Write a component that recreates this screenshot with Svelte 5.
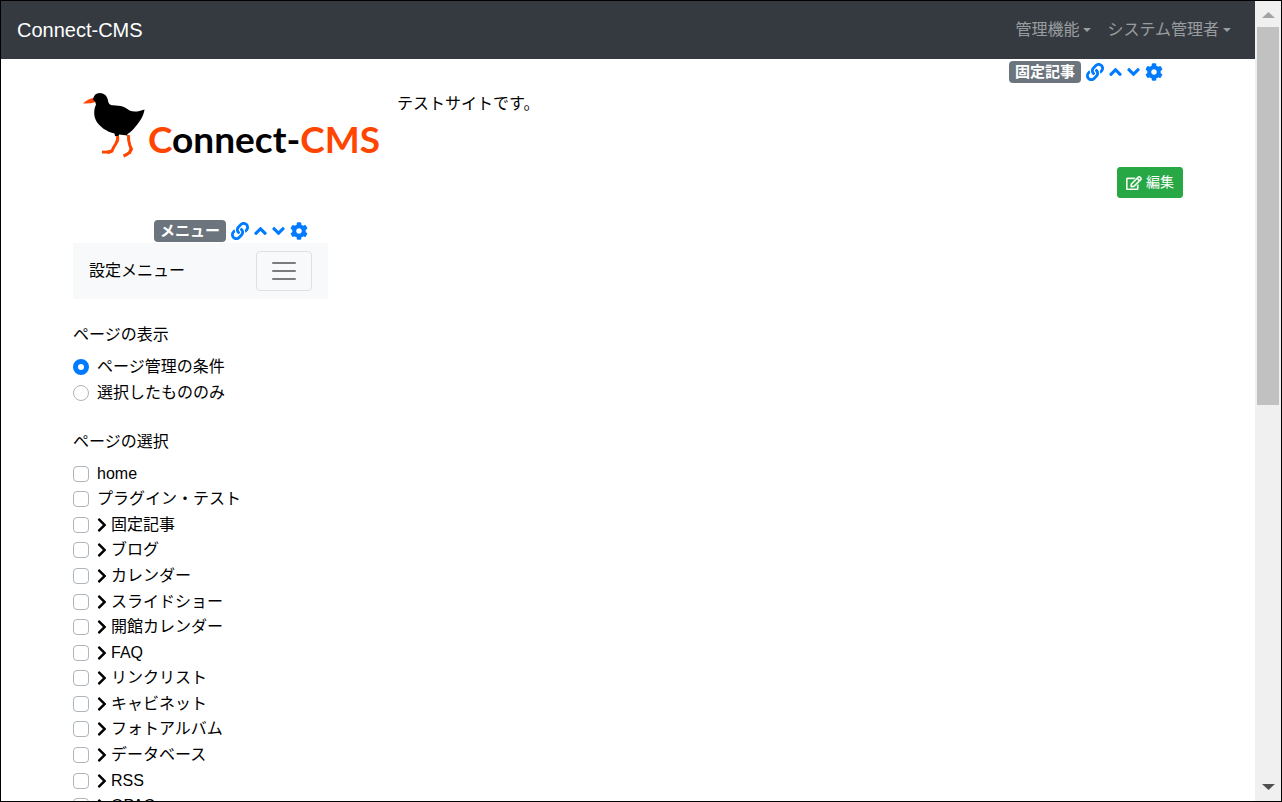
<script>
  const pages = [
    { name: 'home', child: false },
    { name: 'プラグイン・テスト', child: false },
    { name: '固定記事', child: true },
    { name: 'ブログ', child: true },
    { name: 'カレンダー', child: true },
    { name: 'スライドショー', child: true },
    { name: '開館カレンダー', child: true },
    { name: 'FAQ', child: true },
    { name: 'リンクリスト', child: true },
    { name: 'キャビネット', child: true },
    { name: 'フォトアルバム', child: true },
    { name: 'データベース', child: true },
    { name: 'RSS', child: true },
    { name: 'OPAC', child: true },
  ];
  let display = $state('all');
</script>

{#snippet tools(label)}
  <div class="tools">
    <span class="badge">{label}</span>
    <a href="#link" aria-label="リンク">
      <svg width="18" height="18" viewBox="0 0 512 512"><path d="M326.612 185.391c59.747 59.809 58.927 155.698.36 214.59-.11.12-.24.25-.36.37l-67.2 67.2c-59.27 59.27-155.699 59.262-214.96 0-59.27-59.26-59.27-155.7 0-214.96l37.106-37.106c9.84-9.84 26.786-3.3 27.294 10.606.648 17.722 3.826 35.527 9.69 52.721 1.986 5.822.567 12.262-3.783 16.612l-13.087 13.087c-28.026 28.026-28.905 73.66-1.155 101.96 28.024 28.579 74.086 28.749 102.325.51l67.2-67.19c28.191-28.191 28.073-73.757 0-101.83-3.701-3.694-7.429-6.564-10.341-8.569a16.037 16.037 0 0 1-6.947-12.606c-.396-10.567 3.348-21.456 11.698-29.806l21.054-21.055c5.521-5.521 14.182-6.199 20.584-1.731a152.482 152.482 0 0 1 20.522 17.197zM467.547 44.449c-59.261-59.262-155.69-59.27-214.96 0l-67.2 67.2c-.12.12-.25.25-.36.37-58.566 58.892-59.387 154.781.36 214.59a152.454 152.454 0 0 0 20.521 17.196c6.402 4.468 15.064 3.789 20.584-1.731l21.054-21.055c8.35-8.35 12.094-19.239 11.698-29.806a16.037 16.037 0 0 0-6.947-12.606c-2.912-2.005-6.64-4.875-10.341-8.569-28.073-28.073-28.191-73.639 0-101.83l67.2-67.19c28.239-28.239 74.3-28.069 102.325.51 27.75 28.3 26.872 73.934-1.155 101.96l-13.087 13.087c-4.35 4.35-5.769 10.79-3.783 16.612 5.864 17.194 9.042 34.999 9.69 52.721.509 13.906 17.454 20.446 27.294 10.606l37.106-37.106c59.271-59.259 59.271-155.699.001-214.959z" /></svg>
    </a>
    <a href="#up" aria-label="上へ">
      <svg width="13" height="20" viewBox="0 0 320 512"><path d="M177 159.7l136 136c9.4 9.4 9.4 24.6 0 33.9l-22.6 22.6c-9.4 9.4-24.6 9.4-33.9 0L160 255.9l-96.4 96.4c-9.4 9.4-24.6 9.4-33.9 0L7 329.7c-9.4-9.4-9.4-24.6 0-33.9l136-136c9.4-9.5 24.6-9.5 34-.1z" /></svg>
    </a>
    <a href="#down" aria-label="下へ">
      <svg width="13" height="20" viewBox="0 0 320 512"><path d="M143 352.3L7 216.3c-9.4-9.4-9.4-24.6 0-33.9l22.6-22.6c9.4-9.4 24.6-9.4 33.9 0l96.4 96.4 96.4-96.4c9.4-9.4 24.6-9.4 33.9 0l22.6 22.6c9.4 9.4 9.4 24.6 0 33.9l-136 136c-9.2 9.4-24.4 9.4-33.8 0z" /></svg>
    </a>
    <a href="#settings" aria-label="設定">
      <svg width="18" height="18" viewBox="0 0 512 512"><path d="M487.4 315.7l-42.6-24.6c4.3-23.2 4.3-47 0-70.2l42.6-24.6c4.9-2.8 7.1-8.6 5.5-14-11.1-35.6-30-67.8-54.7-94.6-3.8-4.1-10-5.1-14.8-2.3L380.8 110c-17.9-15.4-38.5-27.3-60.8-35.1V25.8c0-5.6-3.9-10.5-9.4-11.7-36.7-8.2-74.3-7.8-109.2 0-5.5 1.2-9.4 6.1-9.4 11.7V75c-22.2 7.9-42.8 19.8-60.8 35.1L88.7 85.5c-4.9-2.8-11-1.9-14.8 2.3-24.7 26.7-43.6 58.9-54.7 94.6-1.7 5.4.6 11.2 5.5 14L67.3 221c-4.3 23.2-4.3 47 0 70.2l-42.6 24.6c-4.9 2.8-7.1 8.6-5.5 14 11.1 35.6 30 67.8 54.7 94.6 3.8 4.1 10 5.1 14.8 2.3l42.6-24.6c17.9 15.4 38.5 27.3 60.8 35.1v49.2c0 5.6 3.9 10.5 9.4 11.7 36.7 8.2 74.3 7.8 109.2 0 5.5-1.2 9.4-6.1 9.4-11.7v-49.2c22.2-7.9 42.8-19.8 60.8-35.1l42.6 24.6c4.9 2.8 11 1.9 14.8-2.3 24.7-26.7 43.6-58.9 54.7-94.6 1.5-5.5-.7-11.3-5.6-14.1zM256 336c-44.1 0-80-35.9-80-80s35.9-80 80-80 80 35.9 80 80-35.9 80-80 80z" /></svg>
    </a>
  </div>
{/snippet}

<div class="window">
  <div class="page">
    <nav class="navbar">
      <a class="brand" href="#top">Connect-CMS</a>
      <div class="nav-items">
        <button class="dropdown">管理機能</button>
        <button class="dropdown">システム管理者</button>
      </div>
    </nav>

    <div class="container">
      <header>
        {@render tools('固定記事')}
        <div class="intro">
          <svg class="logo" width="310" height="76" viewBox="3 10 310 76" role="img" aria-label="Connect-CMS">
            <path fill="#ff4500" d="M25.500 17.500Q18 18.500 13 23.500Q19 24 26 22z" />
            <path fill="#000" d="M23 19C24 15 26 13 29.500 13C34 13 37.500 16 38 20.500C38.500 23.500 39.500 25 43 25.300C51 25.500 55 27 59.500 30.500C64 32.500 69 31.500 74.500 29.500C74 35 70 41.500 66 46C63 50 60 52.500 57.500 54L57 55.500L53.500 55L49 54.500L48.500 56.500L45 56L44.500 53.500C37 52 29 46.500 26 40.500C23.500 35.500 23.800 29 26 24.800L25.300 22C24.500 21 23.500 20.500 23 19z" />
            <path fill="none" stroke="#ff4500" stroke-width="3" d="M47.500 56Q48.500 60 46 63.500Q43.500 67 42 71Q38 72.500 32 72M42 71L37.500 72.800M58.500 55Q58 60 60 66L61.500 69Q60 73.500 53.500 76M61 68L59.500 73.500" />
            <text x="78" y="73"><tspan class="accent">C</tspan>onnect-<tspan class="accent">CMS</tspan></text>
          </svg>
          <p>テストサイトです。</p>
        </div>
        <div class="actions">
          <button class="edit">
            <svg width="16" height="14" viewBox="0 0 576 512"><path d="M402.3 344.9l32-32c5-5 13.7-1.5 13.7 5.7V464c0 26.5-21.5 48-48 48H48c-26.500 0-48-21.500-48-48V112c0-26.500 21.500-48 48-48h273.500c7.100 0 10.700 8.600 5.700 13.700l-32 32c-1.500 1.500-3.500 2.300-5.700 2.300H48v352h352V350.500c0-2.100.8-4.100 2.300-5.600zm156.600-201.800L296.300 405.700l-90.400 10c-26.200 2.900-48.500-19.200-45.600-45.600l10-90.400L432.900 17.100c22.900-22.900 59.900-22.900 82.700 0l43.200 43.200c22.900 22.900 22.900 60 .1 82.800zM460.100 174L402 115.900 216.200 301.800l-7.300 65.300 65.300-7.300L460.100 174zm64.800-79.700l-43.200-43.200c-4.100-4.100-10.800-4.100-14.800 0L436 82l58.100 58.100 30.900-30.900c4-4.200 4-10.800-.1-14.900z" /></svg>
            編集
          </button>
        </div>
      </header>

      <aside>
        {@render tools('メニュー')}
        <div class="menu-bar">
          <span>設定メニュー</span>
          <button class="toggler" aria-label="メニューを開く">
            <svg width="30" height="30" viewBox="0 0 30 30"><path stroke="rgba(0,0,0,.5)" stroke-width="2" stroke-linecap="round" d="M4 7h22M4 15h22M4 23h22" /></svg>
          </button>
        </div>

        <fieldset>
          <legend>ページの表示</legend>
          <div class="rows">
            <label><input type="radio" name="display" value="all" bind:group={display} />ページ管理の条件</label>
            <label><input type="radio" name="display" value="selected" bind:group={display} />選択したもののみ</label>
          </div>
        </fieldset>

        <fieldset>
          <legend>ページの選択</legend>
          <div class="rows pages">
            {#each pages as page}
              <label>
                <input type="checkbox" />
                {#if page.child}
                  <svg class="chevron" width="10" height="16" viewBox="0 0 320 512"><path d="M285.476 272.971L91.132 467.314c-9.373 9.373-24.569 9.373-33.941 0l-22.667-22.667c-9.357-9.357-9.375-24.522-.04-33.901L188.505 256 34.484 101.255c-9.335-9.379-9.317-24.544.04-33.901l22.667-22.667c9.373-9.373 24.569-9.373 33.941 0L285.475 239.030c9.373 9.372 9.373 24.568.001 33.941z" /></svg>
                {/if}
                <span>{page.name}</span>
              </label>
            {/each}
          </div>
        </fieldset>
      </aside>
    </div>
  </div>

  <div class="scrollbar" aria-hidden="true">
    <svg width="13" height="26" viewBox="0 0 13 26"><path fill="#a3a3a3" d="M0 17L6.500 11L13 17z" /></svg>
    <div class="track"><div class="thumb"></div></div>
    <svg width="13" height="26" viewBox="0 0 13 26"><path fill="#505050" d="M0 9L6.500 15L13 9z" /></svg>
  </div>
</div>

<style>
  :global(body) {
    margin: 0;
  }
  .window,
  .window * {
    box-sizing: border-box;
  }
  .window {
    display: flex;
    height: 100vh;
    border: 1px solid #000;
    overflow: hidden;
    background: #fff;
    color: #000;
    font: 16px/24px 'Liberation Sans', 'Noto Sans CJK JP', sans-serif;
  }
  button {
    font: inherit;
    cursor: pointer;
  }
  svg {
    display: block;
    flex: none;
  }
  .page {
    flex: 1;
    min-width: 0;
    overflow: hidden;
  }
  .navbar {
    display: flex;
    align-items: center;
    justify-content: space-between;
    height: 58px;
    padding: 0 16px;
    background: #343a40;
  }
  .brand {
    color: #fff;
    font-size: 20px;
    text-decoration: none;
  }
  .nav-items {
    display: flex;
  }
  .dropdown {
    display: flex;
    align-items: center;
    gap: 4px;
    padding: 8px;
    border: 0;
    background: none;
    color: rgba(255, 255, 255, 0.5);
  }
  .dropdown::after {
    content: '';
    border: 4px solid transparent;
    border-top-color: currentColor;
    border-bottom: 0;
  }
  .container {
    max-width: 1140px;
    margin: 0 auto;
    padding: 0 15px;
  }
  .tools {
    display: flex;
    align-items: center;
    justify-content: flex-end;
    gap: 5px;
    padding: 2px 20px 1px 0;
  }
  .tools svg,
  .edit svg {
    fill: currentColor;
  }
  .tools a {
    color: #007bff;
  }
  .badge {
    padding: 0 6px;
    border-radius: 4px;
    background: #6c757d;
    color: #fff;
    font-size: 15px;
    font-weight: 700;
    line-height: 22px;
  }
  .intro {
    display: flex;
    gap: 14px;
    padding-top: 6px;
  }
  .intro p {
    margin: 0;
    padding-top: 2px;
  }
  .logo text {
    font: 700 37px Lato, sans-serif;
  }
  .accent {
    fill: #ff4500;
  }
  .actions {
    display: flex;
    justify-content: flex-end;
    padding: 1px 0 20px;
  }
  .edit {
    display: flex;
    align-items: center;
    gap: 4px;
    padding: 4px 8px;
    border: 1px solid #28a745;
    border-radius: 3px;
    background: #28a745;
    color: #fff;
    font-size: 14px;
    line-height: 21px;
  }
  .edit svg {
    stroke: currentColor;
    stroke-width: 12;
  }
  aside {
    width: 255px;
  }
  .menu-bar {
    display: flex;
    align-items: center;
    justify-content: space-between;
    margin-bottom: 24px;
    padding: 8px 16px;
    background: #f8f9fa;
  }
  .toggler {
    padding: 4px 12px;
    border: 1px solid rgba(0, 0, 0, 0.1);
    border-radius: 4px;
    background: none;
  }
  fieldset {
    margin: 0 0 24px;
    padding: 0;
    border: 0;
  }
  legend {
    margin-bottom: 7px;
    padding: 0;
  }
  .rows {
    display: grid;
    grid-auto-rows: minmax(26px, 1fr);
  }
  .pages {
    grid-auto-rows: 1fr;
    min-height: 358px;
  }
  label {
    display: flex;
    align-items: center;
  }
  input {
    flex: none;
    appearance: none;
    width: 16px;
    height: 16px;
    margin: 0 8px 0 0;
    border: 1px solid #adb5bd;
    border-radius: 4px;
    background: #fff;
  }
  input[type='radio'] {
    border-radius: 50%;
  }
  input[type='radio']:checked {
    border: 5px solid #007bff;
  }
  input[type='checkbox']:checked {
    border-color: #007bff;
    background: #007bff;
  }
  .chevron {
    margin-right: 4px;
  }
  .scrollbar {
    display: flex;
    flex-direction: column;
    align-items: center;
    width: 26px;
    background: #f0f0f0;
  }
  .track {
    flex: 1;
    width: 22px;
  }
  .thumb {
    height: 378px;
    background: #c1c1c1;
  }
</style>
